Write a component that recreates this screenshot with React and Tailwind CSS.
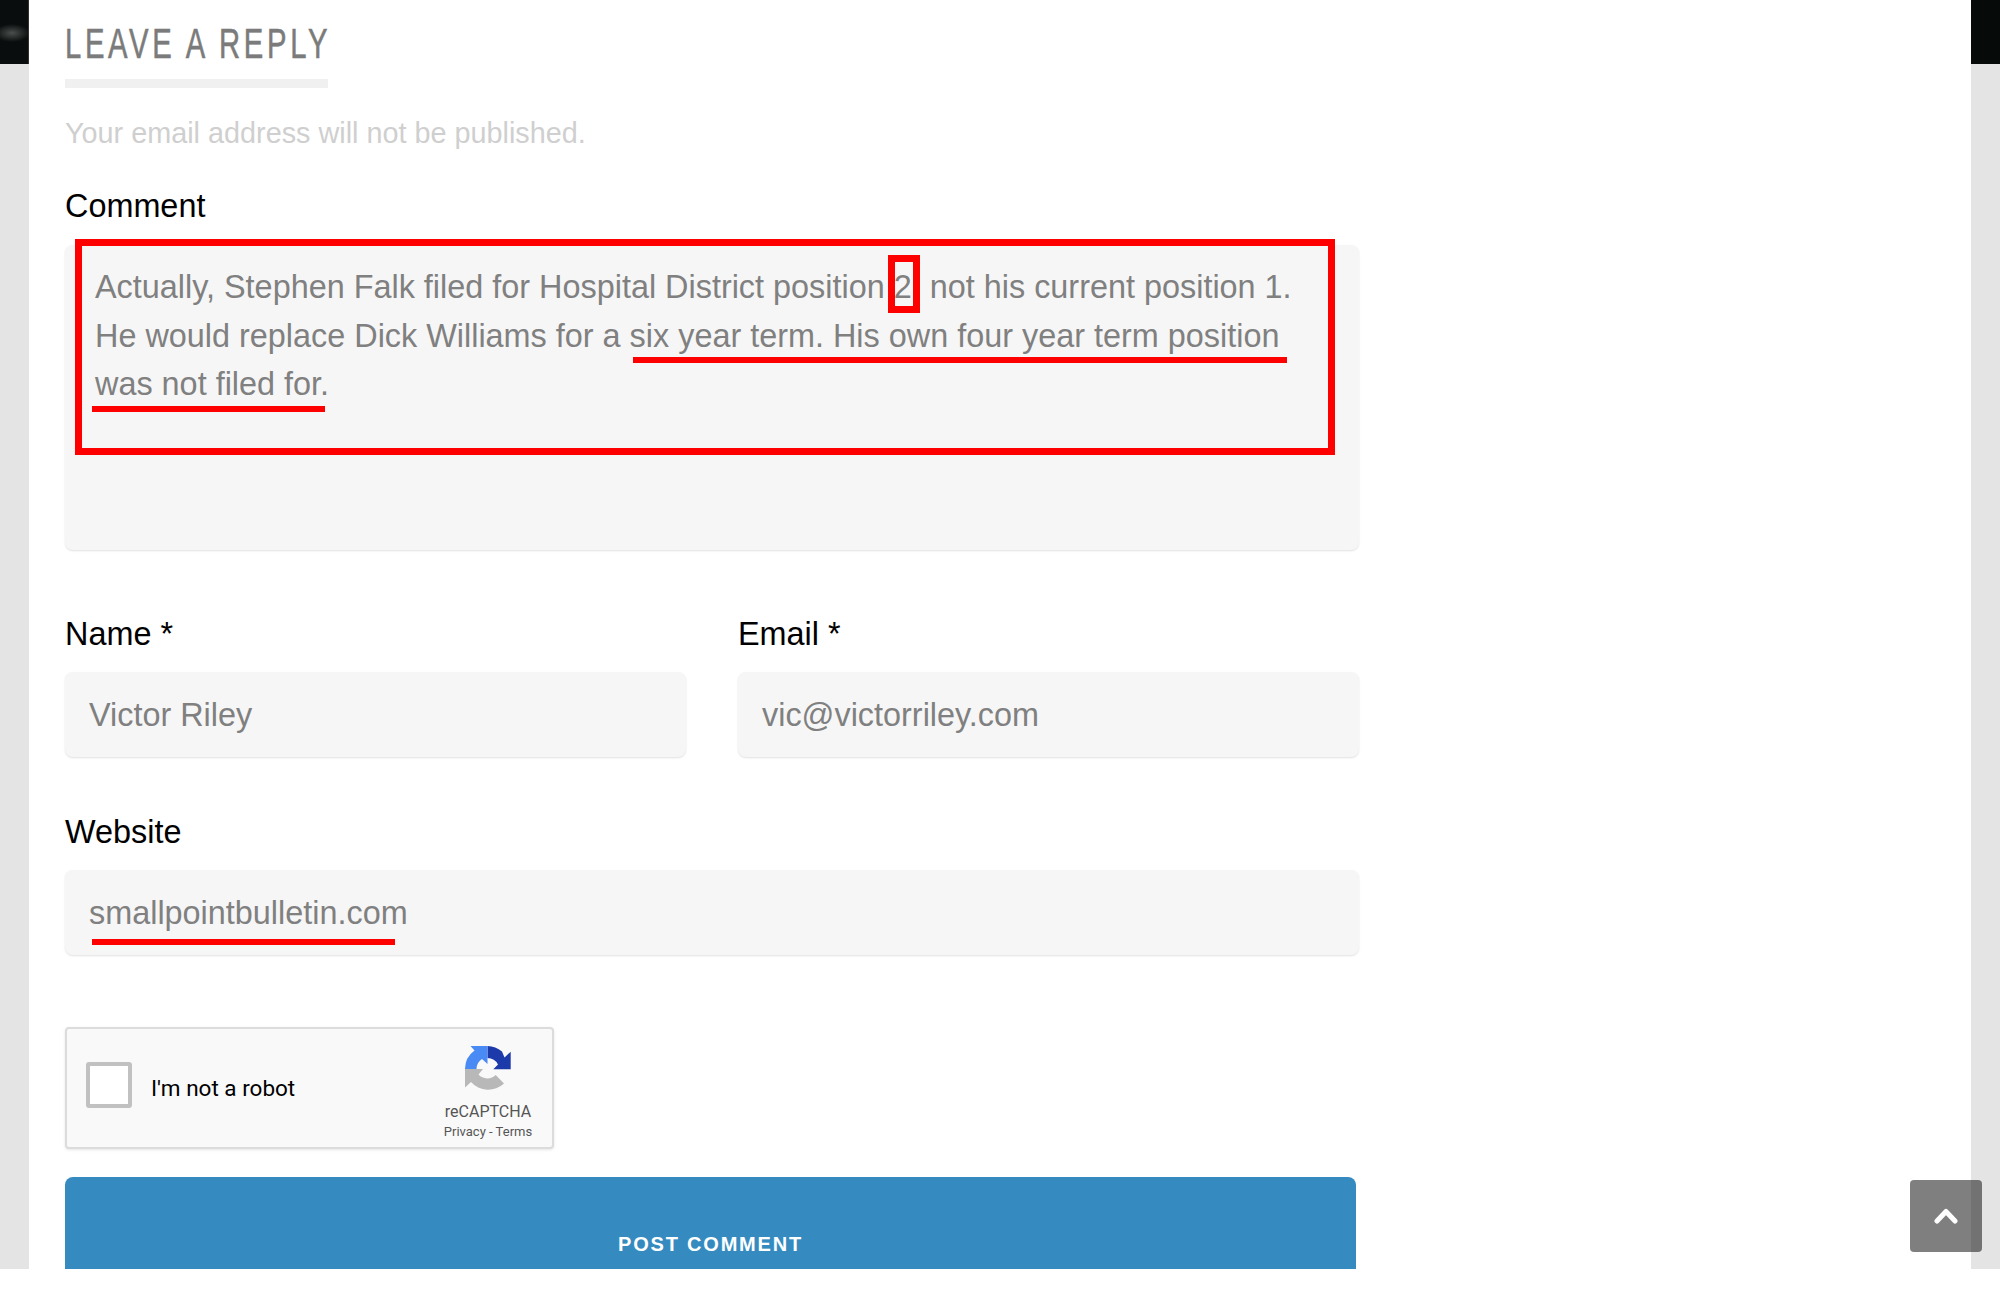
const sans = "font-['Liberation_Sans',Arial,sans-serif]";

const RecaptchaLogo = () => (
  <svg viewBox="0 0 46 48" className="h-[48px] w-[46px]">
    <path d="M22.500 1A23 23 0 0 1 37 6.500L39.500 12.500L45.700 6.700V24.300H28.300L33 19.500A12 12 0 0 0 22.500 13z" fill="#1c3aa9" />
    <path d="M5.500 1H22.500V19L17 14A12 12 0 0 0 11.500 24H0A23 23 0 0 1 9.500 5.500z" fill="#4a8af4" />
    <path d="M0 24H18L13.500 29.500A12 12 0 0 0 30.700 30L39 38.500A23 23 0 0 1 6 37L0 42.500z" fill="#b8b8b8" />
  </svg>
);

const Field = ({ label, value, className = '' }) => (
  <div className={className}>
    <label className="block text-[32.400px] leading-[38px] text-black">{label}</label>
    <div className="mt-[19px] flex h-[85px] items-center rounded-lg bg-[#f6f6f6] pt-[2px] pl-[24px] text-[32.400px] text-[#808080] shadow-[0_1px_2px_rgba(0,0,0,0.12)]">
      {value}
    </div>
  </div>
);

const App = () => {
  return (
    <div className={`h-[1300px] w-full bg-white ${sans}`}>
      <div className="flex h-[1269px] overflow-hidden">
        <div className="w-[29px] shrink-0 bg-[#e4e4e4]">
          <div className="h-[64px] border-r border-[#333] bg-[#0a0d0d] bg-[radial-gradient(ellipse_18px_9px_at_12px_33px,#4a4f4e,transparent)]" />
        </div>

        <main className="relative flex-1 pl-[36px]">
          <div className="w-[1294px]">
            <h3 className="h-[68px] w-fit origin-left scale-x-[0.68] pt-[20px] text-[43px] leading-[46px] tracking-[5.400px] text-[#7b7b7b] uppercase [-webkit-text-stroke:0.6px_#7b7b7b]">
              Leave a Reply
            </h3>
            <div className="mt-[11px] h-[9px] w-[263px] bg-[#f0f0f0]" />
            <p className="mt-[29px] text-[28.800px] leading-[32px] text-[#cfcfcf]">Your email address will not be published.</p>

            <label className="mt-[38px] block text-[32.400px] leading-[38px] text-black">Comment</label>
            <div className="relative mt-[20px] h-[305px] rounded-lg bg-[#f6f6f6] px-[30px] pt-[18px] text-[32.400px] leading-[48.500px] text-[#808080] shadow-[0_1px_2px_rgba(0,0,0,0.12)]">
              <p>Actually, Stephen Falk filed for Hospital District position 2, not his current position 1.</p>
              <p>He would replace Dick Williams for a six year term. His own four year term position</p>
              <p>was not filed for.</p>
              <div className="absolute top-[-6px] left-[10px] h-[216px] w-[1260px] border-[7px] border-[#ff0000]" />
              <div className="absolute top-[10px] left-[823px] h-[58px] w-[32px] border-[7px] border-[#ff0000]" />
              <div className="absolute top-[112px] left-[568px] h-[6px] w-[654px] bg-[#ff0000]" />
              <div className="absolute top-[161px] left-[27px] h-[6px] w-[233px] bg-[#ff0000]" />
            </div>

            <div className="mt-[65px] flex gap-[52px]">
              <Field label="Name *" value="Victor Riley" className="flex-1" />
              <Field label="Email *" value="vic@victorriley.com" className="flex-1" />
            </div>

            <div className="relative mt-[56px]">
              <Field label="Website" value="smallpointbulletin.com" />
              <div className="absolute bottom-[10px] left-[27px] h-[6px] w-[303px] bg-[#ff0000]" />
            </div>

            <div className="mt-[72px] flex h-[122px] w-[489px] items-start rounded-[4px] border-2 border-[#dcdcdc] bg-[#f9f9f9] px-[19px] shadow-[0_1px_3px_rgba(0,0,0,0.1)]">
              <div className="mt-[33px] h-[46px] w-[46px] rounded-[3px] border-[4px] border-[#c1c1c1] bg-white" />
              <span className="mt-[44px] ml-[19px] font-['Roboto',sans-serif] text-[22.500px] leading-[30px] text-black">I'm not a robot</span>
              <div className="mt-[16px] ml-auto flex w-[90px] flex-col items-center font-['Roboto',sans-serif] text-[#555]">
                <RecaptchaLogo />
                <span className="mt-[9px] text-[16px] leading-[20px]">reCAPTCHA</span>
                <span className="mt-[2px] text-[13px] leading-[16px]">Privacy - Terms</span>
              </div>
            </div>

            <button className="mt-[28px] block h-[130px] w-[1291px] rounded-t-lg bg-[#358bc0] pt-[4px] text-[20px] font-bold tracking-[1.800px] text-white uppercase">
              Post Comment
            </button>
          </div>
        </main>

        <div className="w-[29px] shrink-0 bg-[#e4e4e4]">
          <div className="h-[64px] bg-[#060a09]" />
        </div>
      </div>

      <a className="fixed top-[1180px] left-[1910px] flex h-[72px] w-[72px] items-center justify-center rounded-[4px] bg-black/50">
        <svg viewBox="0 0 24 16" className="h-[16px] w-[24px]">
          <path d="M3 13l9-9.500 9 9.500" fill="none" stroke="white" strokeWidth="5" strokeLinecap="round" strokeLinejoin="round" />
        </svg>
      </a>
    </div>
  );
};

export default App;
